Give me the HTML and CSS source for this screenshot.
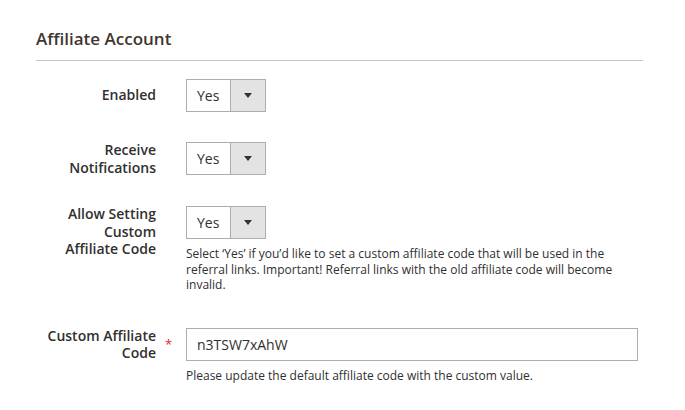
FILE: index.html
```html
<!DOCTYPE html>
<html lang="en">
<head>
    <meta charset="UTF-8">
    <meta name="viewport" content="width=device-width, initial-scale=1.0">
    <title>Affiliate Account</title>
    <link rel="stylesheet" href="styles.css">
</head>
<body>

<!-- Affiliate account fieldset -->
<div class="fieldset">
  <h2 class="fieldset_title">Affiliate Account</h2>

  <div class="field">
    <label class="field_label"><span>Enabled</span></label>
    <div class="field_mark"></div>
    <div class="field_control">
      <div class="select">
        <span class="select_value">Yes</span>
        <span class="select_arrow"></span>
      </div>
    </div>
  </div>

  <div class="field">
    <label class="field_label"><span>Receive<br>Notifications</span></label>
    <div class="field_mark"></div>
    <div class="field_control">
      <div class="select">
        <span class="select_value">Yes</span>
        <span class="select_arrow"></span>
      </div>
    </div>
  </div>

  <div class="field">
    <label class="field_label"><span>Allow Setting<br>Custom<br>Affiliate Code</span></label>
    <div class="field_mark"></div>
    <div class="field_control">
      <div class="select">
        <span class="select_value">Yes</span>
        <span class="select_arrow"></span>
      </div>
      <div class="note">Select ‘Yes’ if you’d like to set a custom affiliate code that will be used in the referral links. Important! Referral links with the old affiliate code will become invalid.</div>
    </div>
  </div>

  <div class="field">
    <label class="field_label"><span>Custom Affiliate<br>Code</span></label>
    <div class="field_mark required">*</div>
    <div class="field_control">
      <input class="input" type="text" value="n3TSW7xAhW">
      <div class="note">Please update the default affiliate code with the custom value.</div>
    </div>
  </div>
</div>

</body>
</html>
```

FILE: styles.css
```css
/* Basic box-sizing reset */
*, *::before, *::after {
    box-sizing: border-box;
}

body {
    margin: 0;
    background: #fff;
    color: #303030;
    font-family: "Open Sans", Arial, sans-serif;
}

/* Fieldset wrapper and its title */
.fieldset {
    width: 607px;
    margin-left: 36px;
    padding-top: 27px;
}

.fieldset_title {
    margin: 0 0 18px 0;
    padding-bottom: 10px;
    border-bottom: 1px solid #ccc5b7;
    color: #41362f;
    font-size: 17px;
    font-weight: 600;
    line-height: 23px;
}

/* One row: label, required mark, control */
.field {
    display: grid;
    grid-template-columns: 120px 30px 452px;
    margin-bottom: 30px;
}

.field_label {
    display: flex;
    align-self: start;
    align-items: center;
    justify-content: flex-end;
    min-height: 33px;
    margin-top: -1px;
    text-align: right;
    font-size: 14px;
    font-weight: 600;
    line-height: 17.5px;
}

.field_label span {
    display: block;
}

.field_mark.required {
    height: 33px;
    padding-left: 9px;
    color: #e22626;
    font-size: 13px;
    line-height: 33px;
}

/* Select box with grey arrow button */
.select {
    display: flex;
    width: 80px;
    height: 33px;
    border: 1px solid #adadad;
    background: #fff;
    font-size: 14px;
}

.select_value {
    flex: 1;
    padding-left: 10px;
    line-height: 31px;
}

.select_arrow {
    position: relative;
    width: 35px;
    border-left: 1px solid #adadad;
    background: #e3e3e3;
}

.select_arrow::after {
    content: "";
    position: absolute;
    top: 13px;
    left: 13px;
    border-top: 5px solid #333;
    border-left: 4px solid transparent;
    border-right: 4px solid transparent;
}

/* Text input */
.input {
    display: block;
    width: 452px;
    height: 33px;
    margin: 0;
    padding: 0 10px;
    border: 1px solid #adadad;
    border-radius: 0;
    color: #303030;
    font-family: "Open Sans", Arial, sans-serif;
    font-size: 14px;
}

/* Help text under a control */
.note {
    margin: 7px 0 5px 0;
    font-size: 12px;
    line-height: 15.6px;
}
```
